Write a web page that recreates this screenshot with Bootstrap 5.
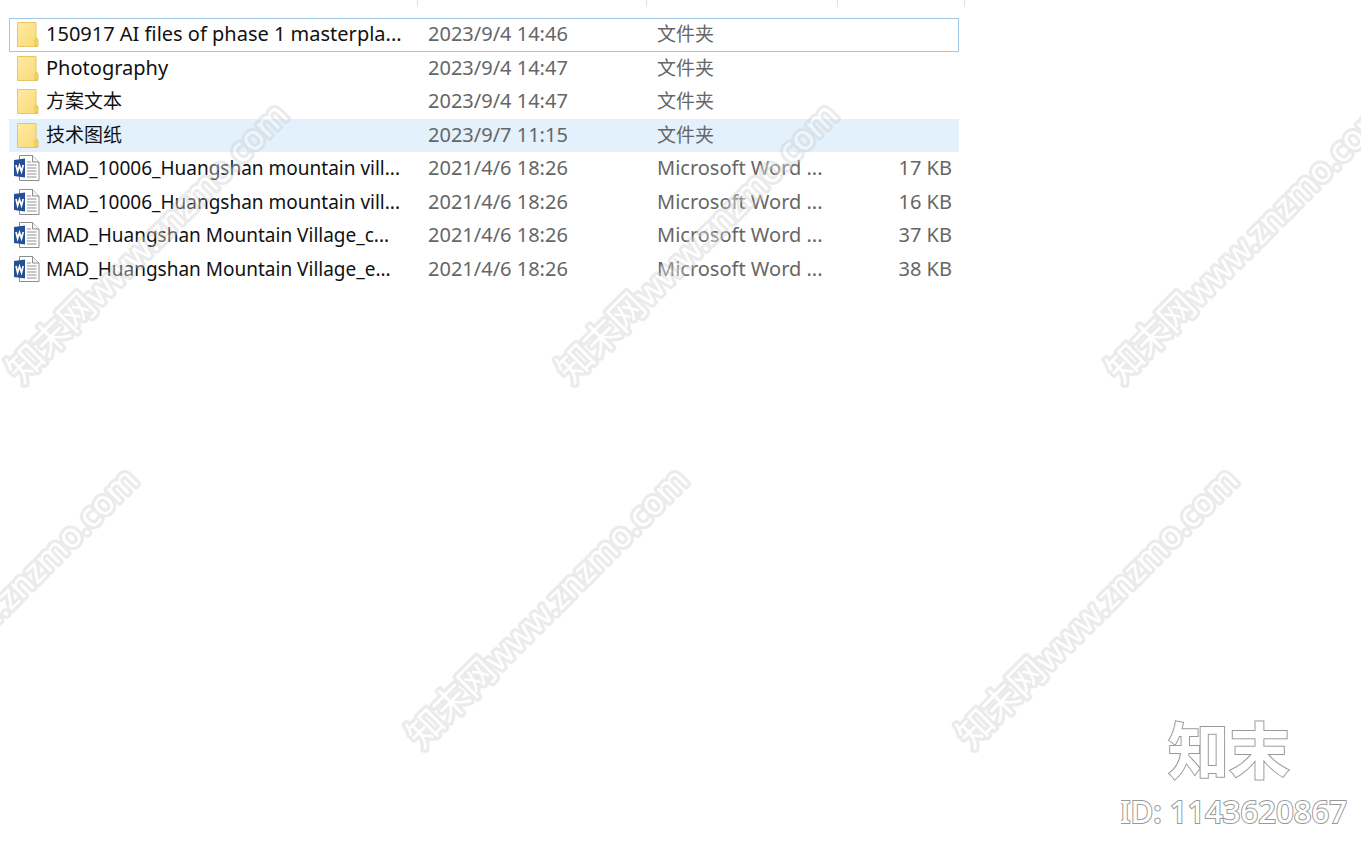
<!DOCTYPE html>
<html lang="zh-CN">
<head>
<meta charset="utf-8">
<meta name="viewport" content="width=device-width, initial-scale=1">
<title>文件夹</title>
<link href="https://cdn.jsdelivr.net/npm/bootstrap@5.3.0/dist/css/bootstrap.min.css" rel="stylesheet">
<style>
body{font-family:"Noto Sans","Noto Sans CJK SC",sans-serif;background:#fff;color:#111;overflow-x:hidden}
.explorer{min-height:100vh;overflow:hidden}
.header-ticks{height:7px}
.header-ticks span{border-right:1px solid #dbe2ea}
.col-name{width:409px}.col-date{width:229px}.col-type{width:191px}.col-size{width:121px}
.tick-size{width:127px}
.file-pane{max-width:968px;padding-left:9px}
.files{table-layout:fixed;width:950px;font-size:20px;line-height:24px;margin-top:11px}
.files td{padding:0 7px 2px 10px;white-space:nowrap;color:#666}
.files td:first-child{padding:0 0 2px 5px}
.files .doc,.files .han{font-size:19px}
.files tr{height:33px}
.files tr:nth-child(odd){height:34px}
.files .focused{outline:1px solid #a3c8e6;outline-offset:-1px}
.files .hovered{background:#e3f1fd}
.files a{color:#111;gap:6px}
.files svg{width:26px;height:28px;flex:none}
.watermarks{pointer-events:none;width:100%;height:100%}
.watermarks text{font-size:34px;fill:#fff;stroke:#cecece;stroke-width:6px;stroke-linejoin:round;paint-order:stroke}
.watermarks .zh{font-size:36px}
.stamp{right:12px;bottom:17px}
.stamp text{fill:#fff;stroke:#999;stroke-width:2px;paint-order:stroke}
</style>
</head>
<body>
<svg width="0" height="0" class="position-absolute" aria-hidden="true">
<defs>
<linearGradient id="fold" x1="0" x2="1" y1="0" y2="1"><stop offset="0" stop-color="#ffeaa6"/><stop offset="1" stop-color="#f9da74"/></linearGradient>
<symbol id="folder" viewBox="0 0 26 28"><path d="M3.500 2.500h18.500v15.500l1.500 1v7.500h-20z" fill="url(#fold)" stroke="#e6c765"/><path d="M21 26v-6l1.500-2 1.500 2v6z" fill="#f8d563" stroke="#dfba4c" stroke-width=".8"/></symbol>
<symbol id="word" viewBox="0 0 26 28"><path d="M5.500 1.500h13l6.500 6.500v18.500h-19.500z" fill="#fff" stroke="#8d8d8d"/><path d="M18.500 1.500v6.500h6.500" fill="#f4f4f4" stroke="#8d8d8d"/><path d="M13 8h4M13 11h9.500M13 14h9.500M13 17h9.500M13 20h9.500M13 23h9.500" stroke="#8f9296" stroke-width="1.200"/><path d="M0 6l11-1.500v19L0 22z" fill="#274f93"/><path d="M2 11l1.600 6.500L5.500 11.500l2 6L9.200 11" fill="none" stroke="#fff" stroke-width="1.700"/></symbol>
</defs>
</svg>
<main class="explorer position-relative">
<div class="file-pane">
<div class="header-ticks d-flex" aria-hidden="true"><span class="col-name"></span><span class="col-date"></span><span class="col-type"></span><span class="tick-size"></span></div>
<table class="files">
<colgroup><col class="col-name"><col class="col-date"><col class="col-type"><col class="col-size"></colgroup>
<tbody>
<tr class="focused"><td><a href="#" class="d-flex align-items-center text-decoration-none"><svg aria-hidden="true"><use href="#folder"/></svg>150917 AI files of phase 1 masterpla...</a></td><td>2023/9/4 14:46</td><td class="han">文件夹</td><td></td></tr>
<tr><td><a href="#" class="d-flex align-items-center text-decoration-none"><svg aria-hidden="true"><use href="#folder"/></svg>Photography</a></td><td>2023/9/4 14:47</td><td class="han">文件夹</td><td></td></tr>
<tr><td><a href="#" class="han d-flex align-items-center text-decoration-none"><svg aria-hidden="true"><use href="#folder"/></svg>方案文本</a></td><td>2023/9/4 14:47</td><td class="han">文件夹</td><td></td></tr>
<tr class="hovered"><td><a href="#" class="han d-flex align-items-center text-decoration-none"><svg aria-hidden="true"><use href="#folder"/></svg>技术图纸</a></td><td>2023/9/7 11:15</td><td class="han">文件夹</td><td></td></tr>
<tr><td><a href="#" class="doc d-flex align-items-center text-decoration-none"><svg aria-hidden="true"><use href="#word"/></svg>MAD_10006_Huangshan mountain vill...</a></td><td>2021/4/6 18:26</td><td>Microsoft Word ...</td><td class="text-end">17 KB</td></tr>
<tr><td><a href="#" class="doc d-flex align-items-center text-decoration-none"><svg aria-hidden="true"><use href="#word"/></svg>MAD_10006_Huangshan mountain vill...</a></td><td>2021/4/6 18:26</td><td>Microsoft Word ...</td><td class="text-end">16 KB</td></tr>
<tr><td><a href="#" class="doc d-flex align-items-center text-decoration-none"><svg aria-hidden="true"><use href="#word"/></svg>MAD_Huangshan Mountain Village_c...</a></td><td>2021/4/6 18:26</td><td>Microsoft Word ...</td><td class="text-end">37 KB</td></tr>
<tr><td><a href="#" class="doc d-flex align-items-center text-decoration-none"><svg aria-hidden="true"><use href="#word"/></svg>MAD_Huangshan Mountain Village_e...</a></td><td>2021/4/6 18:26</td><td>Microsoft Word ...</td><td class="text-end">38 KB</td></tr>
</tbody>
</table>
</div>
<svg class="watermarks position-absolute top-0 start-0" opacity=".4">
<text transform="translate(22 385) rotate(-45)"><tspan class="zh">知末网</tspan>www.znzmo.com</text>
<text transform="translate(572 385) rotate(-45)"><tspan class="zh">知末网</tspan>www.znzmo.com</text>
<text transform="translate(1122 385) rotate(-45)"><tspan class="zh">知末网</tspan>www.znzmo.com</text>
<text transform="translate(-128 750) rotate(-45)"><tspan class="zh">知末网</tspan>www.znzmo.com</text>
<text transform="translate(422 750) rotate(-45)"><tspan class="zh">知末网</tspan>www.znzmo.com</text>
<text transform="translate(972 750) rotate(-45)"><tspan class="zh">知末网</tspan>www.znzmo.com</text>
</svg>
<svg class="stamp position-absolute" width="228" height="118">
<text x="47" y="58" font-size="61" font-weight="700">知末</text>
<text x="226" y="107" font-size="31" font-weight="500" text-anchor="end">ID: 1143620867</text>
</svg>
</main>
<script src="https://cdn.jsdelivr.net/npm/bootstrap@5.3.0/dist/js/bootstrap.bundle.min.js"></script>
</body>
</html>
